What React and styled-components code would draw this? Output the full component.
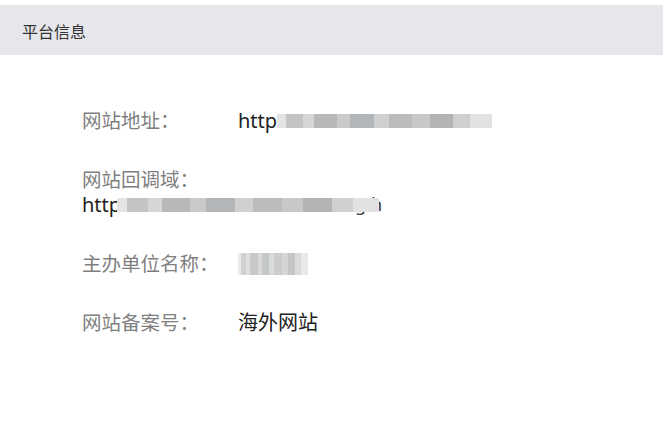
import React from 'react'
import styled, { createGlobalStyle } from 'styled-components'

const GlobalStyle = createGlobalStyle`
body{
margin:0;
background:#fff;
font-family:"Noto Sans","Noto Sans CJK SC",sans-serif;
}
`;

const Page = styled.div`
padding-top:5px;
width:663px;
height:423px;
background:#fff;
`;

const Header = styled.div`
height:50px;
display:flex;
align-items:center;
padding:2px 0px 0px 22px;
box-sizing:border-box;
background:#e6e7eb;
font-size:16px;
color:#333;
`;

const Body = styled.div`
display:flex;
flex-direction:column;
gap:34px;
padding:53px 0px 0px 82px;
`;

const Row = styled.div`
display:flex;
flex-direction:${({ $stack }) => ($stack ? 'column' : 'row')};
line-height:25px;
`;

const Label = styled.span`
width:${({ $stack }) => ($stack ? 'auto' : '156px')};
flex-shrink:0;
font-size:19.5px;
color:#7f7f7f;
`;

const Value = styled.span`
display:flex;
align-items:center;
font-size:20px;
color:#222;
white-space:nowrap;
`;

const Mosaic = styled.span`
display:inline-block;
width:${({ $w }) => $w}px;
height:${({ $h }) => $h || 14}px;
margin-left:${({ $ml }) => $ml || 0}px;
position:relative;
z-index:1;
background:linear-gradient(90deg,
  #e4e4e4 0 4%, #c4c4c4 4% 12%, #d6d6d6 12% 17%, #b8b8b8 17% 28%,
  #cacaca 28% 34%, #b2b6b8 34% 45%, #d0d0d0 45% 52%, #bcbcbc 52% 63%,
  #c8c8c8 63% 71%, #b4b4b4 71% 82%, #cfcfcf 82% 90%, #e2e2e2 90% 100%);
opacity:${({ $light }) => ($light ? 0.75 : 1)};
filter:blur(0.6px);
`;

const Tail = styled.span`
margin-left:-24px;
font-size:18px;
color:#333;
`;

const App = () => {
  return (
    <>
      <GlobalStyle />
      <Page>
        <Header>平台信息</Header>
        <Body>
          <Row>
            <Label>网站地址：</Label>
            <Value>
              http
              <Mosaic $w={215} />
            </Value>
          </Row>
          <Row $stack>
            <Label $stack>网站回调域：</Label>
            <Value>
              http
              <Mosaic $w={262} $ml={-4} />
              <Tail>g.h</Tail>
            </Value>
          </Row>
          <Row>
            <Label>主办单位名称：</Label>
            <Value>
              <Mosaic $w={70} $h={22} $light />
            </Value>
          </Row>
          <Row>
            <Label>网站备案号：</Label>
            <Value>海外网站</Value>
          </Row>
        </Body>
      </Page>
    </>
  )
}

export default App
